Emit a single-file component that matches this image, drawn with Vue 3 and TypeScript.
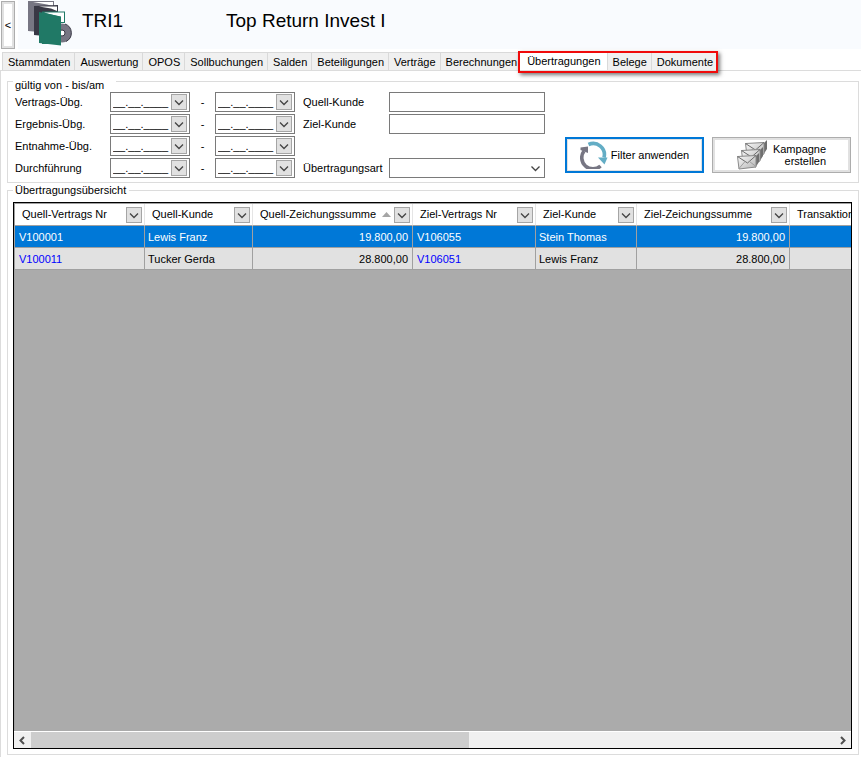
<script setup lang="ts">
import { reactive, ref } from 'vue'

interface DateRange {
  id: string
  label: string
  from: string
  to: string
}

interface Column {
  title: string
  width: number
  sorted?: boolean
  kind?: 'link' | 'amount'
}

const EMPTY_DATE = '__.__.____'

const tabs: string[] = [
  'Stammdaten', 'Auswertung', 'OPOS', 'Sollbuchungen', 'Salden',
  'Beteiligungen', 'Verträge', 'Berechnungen',
]
const markedTabs: string[] = ['Übertragungen', 'Belege', 'Dokumente']
const activeTab = ref('Übertragungen')

const ranges = reactive<DateRange[]>([
  { id: 'vertrag', label: 'Vertrags-Übg.', from: EMPTY_DATE, to: EMPTY_DATE },
  { id: 'ergebnis', label: 'Ergebnis-Übg.', from: EMPTY_DATE, to: EMPTY_DATE },
  { id: 'entnahme', label: 'Entnahme-Übg.', from: EMPTY_DATE, to: EMPTY_DATE },
  { id: 'durchfuehrung', label: 'Durchführung', from: EMPTY_DATE, to: EMPTY_DATE },
])
const sourceCustomer = ref('')
const targetCustomer = ref('')
const transferKind = ref('')

const columns: Column[] = [
  { title: 'Quell-Vertrags Nr', width: 130, kind: 'link' },
  { title: 'Quell-Kunde', width: 108 },
  { title: 'Quell-Zeichungssumme', width: 160, sorted: true, kind: 'amount' },
  { title: 'Ziel-Vertrags Nr', width: 123, kind: 'link' },
  { title: 'Ziel-Kunde', width: 101 },
  { title: 'Ziel-Zeichungssumme', width: 153, kind: 'amount' },
  { title: 'Transaktion', width: 160 },
]

const rows: string[][] = [
  ['V100001', 'Lewis Franz', '19.800,00', 'V106055', 'Stein Thomas', '19.800,00', ''],
  ['V100011', 'Tucker Gerda', '28.800,00', 'V106051', 'Lewis Franz', '28.800,00', ''],
]
const selectedRow = ref(0)
</script>

<template>
  <div class="window">
    <header class="header">
      <button class="collapse" type="button">&lt;</button>
      <div class="banner">
        <svg class="books" viewBox="0 0 46 46" aria-hidden="true">
          <path d="M1 1 L27 1 L27 9 L23 33 L1 31 Z" fill="#777683" />
          <path d="M6 2 H26 V6 L20 4.500 Z" fill="#fff" />
          <path d="M7 6 L31 5 L31 12 L28 37 L7 35 Z" fill="#393845" />
          <path d="M12 6.500 H30 V11 L24 8.500 Z" fill="#fff" />
          <circle cx="35" cy="33" r="9.500" fill="#777683" />
          <path d="M38 24 A9.500 9.500 0 0 1 39 41.500" fill="none" stroke="#393845" stroke-width="1" />
          <circle cx="35" cy="33" r="3" fill="#fff" stroke="#393845" stroke-width="1" />
          <path d="M15 11.500 H38 V23 H34 V44 H15 Z" fill="#207966" />
          <path d="M17 12.500 H37 V22 H34 V17 Z" fill="#fff" />
          <path d="M12 12 L34 16.500 V45.500 L12 43 Z" fill="#207966" />
        </svg>
        <h1 class="code">TRI1</h1>
        <h2 class="name">Top Return Invest I</h2>
      </div>
    </header>

    <nav class="tabs" role="tablist">
      <button
        v-for="tab in tabs" :key="tab" type="button" role="tab" class="tab"
        :class="{ active: activeTab === tab }" :aria-selected="activeTab === tab"
        @click="activeTab = tab"
      >{{ tab }}</button>
      <span class="marked">
        <button
          v-for="tab in markedTabs" :key="tab" type="button" role="tab" class="tab"
          :class="{ active: activeTab === tab }" :aria-selected="activeTab === tab"
          @click="activeTab = tab"
        >{{ tab }}</button>
      </span>
    </nav>

    <main class="page">
      <fieldset class="group filter">
        <legend>gültig von - bis/am</legend>
        <div class="filter-body">
          <div class="ranges">
            <div v-for="range in ranges" :key="range.id" class="range">
              <label :for="range.id">{{ range.label }}</label>
              <span class="date">
                <input :id="range.id" v-model="range.from" type="text">
                <button class="drop" type="button">
                  <svg viewBox="0 0 14 14" aria-hidden="true"><path d="M3 5.500 L7 9.500 L11 5.500" /></svg>
                </button>
              </span>
              <span class="dash">-</span>
              <span class="date">
                <input v-model="range.to" type="text">
                <button class="drop" type="button">
                  <svg viewBox="0 0 14 14" aria-hidden="true"><path d="M3 5.500 L7 9.500 L11 5.500" /></svg>
                </button>
              </span>
            </div>
          </div>
          <div class="customers">
            <label for="source">Quell-Kunde</label>
            <input id="source" v-model="sourceCustomer" class="box" type="text">
            <label for="target">Ziel-Kunde</label>
            <input id="target" v-model="targetCustomer" class="box" type="text">
            <label for="kind" class="kind">Übertragungsart</label>
            <span class="select kind">
              <select id="kind" v-model="transferKind" class="box"><option value="" /></select>
              <svg viewBox="0 0 13 13" aria-hidden="true"><path d="M2.500 4.500 L6.500 8.500 L10.500 4.500" /></svg>
            </span>
          </div>
          <div class="actions">
            <button class="action primary" type="button">
              <svg class="refresh" viewBox="0 0 28 28" aria-hidden="true">
                <path d="M8.500 3.500 A11.200 11.200 0 0 1 24 16.500" fill="none" stroke="#63adc5" stroke-width="3.600" />
                <path d="M18 16.500 L27.500 16.500 L24.500 23.500 Z" fill="#63adc5" />
                <path d="M20.500 25 A11.200 11.200 0 0 1 4 10" fill="none" stroke="#777683" stroke-width="3.600" />
                <path d="M0.500 6.500 L8 5.500 L8 12 L0.500 9 Z" fill="#777683" />
              </svg>
              <span>Filter anwenden</span>
            </button>
            <button class="action" type="button">
              <svg class="mails" viewBox="0 0 30 30" aria-hidden="true">
                <defs>
                  <linearGradient id="paper" x1="0" y1="0" x2="1" y2="1">
                    <stop offset="0" stop-color="#fafafa" />
                    <stop offset="1" stop-color="#b4b4b4" />
                  </linearGradient>
                  <g id="mail">
                    <path d="M18 5 L22 1 V10 L18 16 Z" fill="#6f6f6f" />
                    <path d="M0.500 4.500 L19 3.500 V15 L2 17 Z" fill="url(#paper)" stroke="#8a8a8a" stroke-width="1" />
                    <path d="M0.500 4.500 L10.500 11 L19 3.500" fill="none" stroke="#6c6c6c" stroke-width="1" />
                    <path d="M2 16.500 L8 9.500 M19 14.500 L12.500 9.500" fill="none" stroke="#a0a0a0" stroke-width="1" />
                  </g>
                </defs>
                <use href="#mail" x="8" y="-1" />
                <use href="#mail" x="4" y="6" />
                <use href="#mail" x="0" y="12" />
              </svg>
              <span class="two-lines">Kampagne<br>erstellen</span>
            </button>
          </div>
        </div>
      </fieldset>

      <fieldset class="group overview">
        <legend>Übertragungsübersicht</legend>
        <div class="grid">
          <div class="viewport">
            <table>
              <colgroup>
                <col v-for="column in columns" :key="column.title" :style="{ width: column.width + 'px' }">
              </colgroup>
              <thead>
                <tr>
                  <th v-for="column in columns" :key="column.title" scope="col">
                    <div class="head">
                      <span class="title">{{ column.title }}</span>
                      <svg v-if="column.sorted" class="sort" viewBox="0 0 9 5" aria-hidden="true"><path d="M0 5 L4.500 0 L9 5 Z" /></svg>
                      <button class="drop" type="button">
                        <svg viewBox="0 0 14 14" aria-hidden="true"><path d="M3 5.500 L7 9.500 L11 5.500" /></svg>
                      </button>
                    </div>
                  </th>
                </tr>
              </thead>
              <tbody>
                <tr
                  v-for="(row, r) in rows" :key="r"
                  :class="{ selected: selectedRow === r }" @click="selectedRow = r"
                >
                  <td v-for="(cell, c) in row" :key="c" :class="columns[c].kind">
                    <a v-if="columns[c].kind === 'link'" href="#" @click.prevent>{{ cell }}</a>
                    <template v-else>{{ cell }}</template>
                  </td>
                </tr>
              </tbody>
            </table>
          </div>
          <div class="scrollbar">
            <button type="button" class="arrow">
              <svg viewBox="0 0 9 9" aria-hidden="true"><path d="M6 1 L2.500 4.500 L6 8" /></svg>
            </button>
            <div class="track"><div class="thumb" /></div>
            <button type="button" class="arrow">
              <svg viewBox="0 0 9 9" aria-hidden="true"><path d="M3 1 L6.500 4.500 L3 8" /></svg>
            </button>
          </div>
        </div>
      </fieldset>
    </main>
  </div>
</template>

<style>
body {
  background: #fff;
}
</style>

<style scoped>
.window,
.window * {
  box-sizing: border-box;
}

.window {
  display: flex;
  flex-direction: column;
  height: 100vh;
  overflow: hidden;
  color: #000;
  font: 11px/13px "Liberation Sans", Arial, sans-serif;
}

button,
input,
select {
  margin: 0;
  padding: 0;
  border: 0;
  border-radius: 0;
  background: none;
  color: inherit;
  font: inherit;
}

.header {
  display: flex;
  gap: 3px;
  height: 50px;
  padding: 1px 0 0 1px;
}

.collapse {
  width: 14px;
  height: 48px;
  border: 1px solid #adadad;
  background: #fff;
  box-shadow: inset 0 0 0 2px #e1e1e1;
}

.banner {
  display: flex;
  flex: 1;
  margin-top: -1px;
  height: 49px;
  padding-left: 9px;
  background: #f9fbfe;
}

.books {
  width: 46px;
  height: 46px;
}

.code,
.name {
  margin: 9px 0 0;
  font-size: 19px;
  font-weight: 400;
  line-height: 24px;
}

.code {
  width: 144px;
  margin-left: 9px;
}

.tabs {
  display: flex;
  align-items: flex-end;
  height: 20px;
  padding-left: 2px;
}

.tab {
  height: 18px;
  padding: 2px 4px 0 5px;
  border: 1px solid #d9d9d9;
  border-width: 1px 1px 0 0;
  background: #f0f0f0;
  white-space: nowrap;
}

.tab:first-child {
  border-left-width: 1px;
}

.tab.active {
  height: 19px;
  padding: 0 6px 0 8px;
  background: #fff;
}

.marked {
  display: flex;
  align-items: flex-end;
  height: 22px;
  margin: 0 0 -3px -4px;
  padding-bottom: 3px;
  outline: 2px solid #f00a0a;
  outline-offset: -2px;
  box-shadow: 2px 2px 4px #0008;
  position: relative;
}

.page {
  display: flex;
  flex: 1;
  flex-direction: column;
  gap: 1px;
  min-height: 0;
  padding: 0 2px 2px 6px;
  border: 1px solid #dcdcdc;
  border-width: 1px 0 0 1px;
}

.group {
  min-width: 0;
  margin: 0;
  padding: 0 6px 0 5px;
  border: 1px solid #dcdcdc;
}

.group legend {
  padding: 0 3px 0 2px;
}

.filter {
  padding-bottom: 4px;
}

.filter legend {
  padding: 8px 12px 0 2px;
}

.filter-body {
  display: flex;
  padding-left: 2px;
}

.ranges {
  display: flex;
  flex-direction: column;
  gap: 2px;
}

.range {
  display: grid;
  grid-template-columns: 95px 80px 25px 80px;
  height: 20px;
}

.range label,
.customers label {
  line-height: 20px;
}

.dash {
  line-height: 20px;
  text-align: center;
}

.date {
  display: flex;
  align-items: center;
  padding-right: 2px;
  border: 1px solid #7a7a7a;
}

.date input {
  flex: 1;
  min-width: 0;
  height: 18px;
  padding-left: 2px;
}

.drop {
  display: flex;
  flex: none;
  width: 16px;
  height: 16px;
  border: 1px solid #a5a5a5;
  background: #e1e1e1;
}

.drop svg {
  width: 14px;
  height: 14px;
}

.drop path,
.select path {
  fill: none;
  stroke: #444;
  stroke-width: 1.3;
}

.customers {
  display: grid;
  flex: none;
  grid-template-columns: 86px 156px;
  grid-template-rows: repeat(4, 20px);
  row-gap: 2px;
  margin-left: 8px;
}

.kind {
  grid-row: 4;
}

.box {
  width: 100%;
  height: 20px;
  padding: 0 3px;
  border: 1px solid #7a7a7a;
  background: #fff;
}

.select {
  display: grid;
}

.select > * {
  grid-area: 1 / 1;
}

.select select {
  appearance: none;
}

.select svg {
  align-self: center;
  justify-self: end;
  width: 13px;
  height: 13px;
  margin-right: 3px;
  pointer-events: none;
}

.actions {
  display: grid;
  flex: 1;
  grid-template-columns: 1fr 1fr;
  gap: 8px;
  max-width: 286px;
  margin: 0 0 5px 20px;
  align-items: end;
}

.action {
  display: flex;
  align-items: center;
  justify-content: center;
  height: 36px;
  border: 1px solid #adadad;
  background: #fff;
  box-shadow: inset 0 0 0 2px #e1e1e1;
}

.action.primary {
  gap: 3px;
  border: 2px solid #0078d7;
  box-shadow: inset 0 0 0 1px #e1e1e1;
}

.refresh {
  width: 28px;
  height: 28px;
}

.mails {
  width: 30px;
  height: 30px;
  margin-right: 6px;
}

.two-lines {
  line-height: 12px;
  text-align: right;
}

.overview {
  display: flex;
  flex: 1;
  flex-direction: column;
  min-height: 0;
  padding-bottom: 5px;
}

.grid {
  display: flex;
  flex: 1;
  flex-direction: column;
  min-height: 0;
  margin-top: 5px;
  border: 1px solid #000;
  background: #ababab;
}

.viewport {
  flex: 1;
  overflow: hidden;
  border: 1px solid #a0a0a0;
  border-width: 1px 0 0 1px;
}

table {
  width: 935px;
  border-collapse: separate;
  border-spacing: 0;
  table-layout: fixed;
}

th,
td {
  height: 22px;
  padding: 1px 4px 0 3px;
  overflow: hidden;
  border: 1px solid #a0a0a0;
  border-width: 0 1px 1px 0;
  font-weight: 400;
  text-align: left;
  white-space: nowrap;
}

th {
  padding: 0 2px 0 7px;
  border-right-color: #e5e5e5;
  background: #fff;
}

.head {
  display: flex;
  align-items: center;
}

.title {
  flex: 1;
}

.sort {
  width: 9px;
  height: 5px;
  margin-right: 3px;
  fill: #a5a5a5;
}

td {
  background: #e1e1e1;
}

td.link {
  padding-left: 4px;
}

td.amount {
  text-align: right;
}

td a {
  color: #00f;
  text-decoration: none;
}

.selected td {
  background: #0078d7;
  color: #fff;
}

.selected a {
  color: #fff;
}

.scrollbar {
  display: flex;
  height: 17px;
  border-top: 1px solid #fff;
  background: #f0f0f0;
}

.arrow {
  display: flex;
  align-items: center;
  justify-content: center;
  width: 17px;
}

.arrow svg {
  width: 9px;
  height: 9px;
}

.arrow path {
  fill: none;
  stroke: #505050;
  stroke-width: 2;
}

.track {
  flex: 1;
}

.thumb {
  width: 54.5%;
  height: 100%;
  background: #cdcdcd;
}
</style>
